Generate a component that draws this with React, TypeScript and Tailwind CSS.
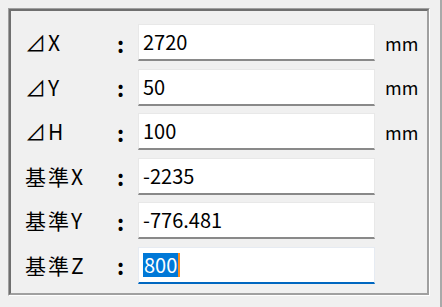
import React from 'react';

const rows = [
  { label: '⊿X', value: '2720', unit: 'mm' },
  { label: '⊿Y', value: '50', unit: 'mm' },
  { label: '⊿H', value: '100', unit: 'mm' },
  { label: '基準X', value: '-2235', unit: '' },
  { label: '基準Y', value: '-776.481', unit: '' },
  { label: '基準Z', value: '800', unit: '', focused: true },
];

const font = { fontFamily: '"Noto Sans CJK JP", "Noto Sans", sans-serif' };

const Row = ({ label, value, unit, focused }: { label: string; value: string; unit: string; focused?: boolean }) => {
  const border = focused
    ? 'border-[#e6ebf2] border-b-[#0067c0]'
    : 'border-[#e8e8e8] border-b-[#898989]';
  return (
    <div className="flex items-center h-[37px]">
      <div className="w-[93px] text-[21px] text-black leading-none pl-[1px] tracking-[2px]">{label}</div>
      <div className="w-[21px] text-[22px] font-bold text-black leading-none">:</div>
      <div className={`w-[237px] h-[37px] bg-white border border-b-2 flex items-center pl-[4px] ${border}`}>
        {focused ? (
          <span className="flex items-center">
            <span className="bg-[#0078d7] text-white text-[20px] leading-[24px] px-[1px]">{value}</span>
            <span className="w-[2px] h-[24px] bg-[#ff8c1a]" />
          </span>
        ) : (
          <span className="text-[20px] text-black leading-none">{value}</span>
        )}
      </div>
      <div className="pl-[10px] text-[18px] text-black leading-none">{unit}</div>
    </div>
  );
};

const App = () => {
  return (
    <div className="w-[442px] h-[307px] bg-[#f0f0f0] border-r-2 border-[#a9a9a9] pt-[8px] pl-[8px]" style={font}>
      <div className="w-[422px] h-[288px] border-t border-l border-[#a0a0a0] border-r border-b border-r-white border-b-white">
        <div className="w-full h-full border-2 border-t-[#6f6f6f] border-l-[#6f6f6f] border-r-[#a0a0a0] border-b-[#a0a0a0] pt-[13px] pl-[13px] flex flex-col gap-[7.5px]">
          {rows.map((r) => (
            <Row key={r.label} {...r} />
          ))}
        </div>
      </div>
    </div>
  );
};

export default App;
